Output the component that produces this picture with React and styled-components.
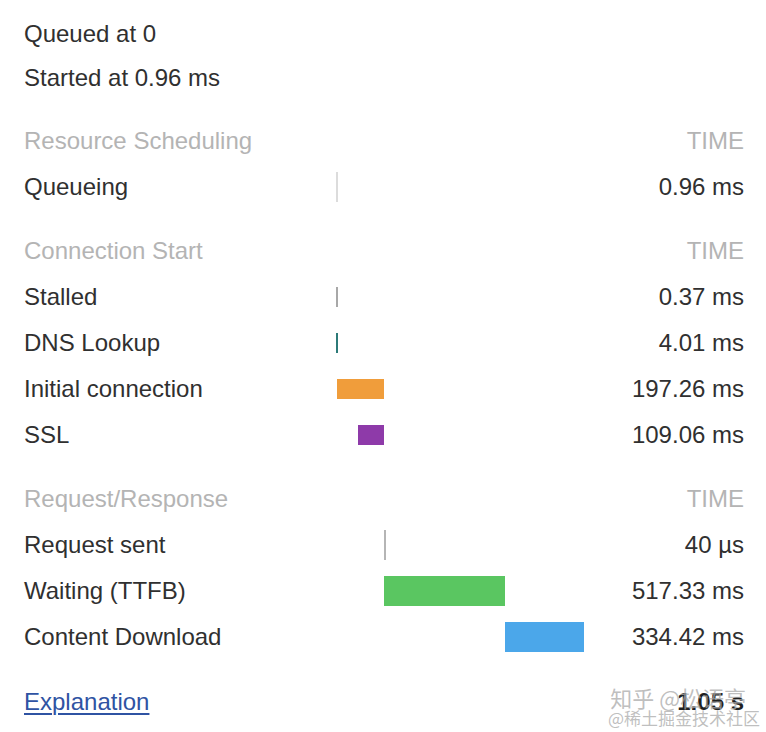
import React from 'react';
import styled, { createGlobalStyle } from 'styled-components';

const GlobalStyle = createGlobalStyle`
  html, body {
    margin: 0;
    padding: 0;
    background: #fff;
  }
  body {
    font-family: "Liberation Sans", Arial, Helvetica, sans-serif;
    color: #303030;
  }
`;

const TOTAL = 1054.39;

const sections = [
  {
    title: 'Resource Scheduling',
    rows: [
      { label: 'Queueing', value: '0.96 ms', start: 0, dur: 0.96, color: '#dcdcdc', h: 30 },
    ],
  },
  {
    title: 'Connection Start',
    rows: [
      { label: 'Stalled', value: '0.37 ms', start: 0.96, dur: 0.37, color: '#a8a8a8', h: 20 },
      { label: 'DNS Lookup', value: '4.01 ms', start: 1.33, dur: 4.01, color: '#2c7a78', h: 20 },
      { label: 'Initial connection', value: '197.26 ms', start: 5.34, dur: 197.26, color: '#f09d3b', h: 20 },
      { label: 'SSL', value: '109.06 ms', start: 93.54, dur: 109.06, color: '#8e3aa9', h: 20 },
    ],
  },
  {
    title: 'Request/Response',
    rows: [
      { label: 'Request sent', value: '40 µs', start: 202.6, dur: 0.04, color: '#b5b5b5', h: 30 },
      { label: 'Waiting (TTFB)', value: '517.33 ms', start: 202.64, dur: 517.33, color: '#5ac661', h: 30 },
      { label: 'Content Download', value: '334.42 ms', start: 719.97, dur: 334.42, color: '#4ba7ea', h: 30 },
    ],
  },
];

const TRACK = 248;

const Panel = styled.div`
  position: relative;
  width: 766px;
  height: 732px;
  box-sizing: border-box;
  padding: 12px 22px 0 24px;
  font-size: 24px;
  overflow: hidden;
`;

const InfoLine = styled.div`
  height: 44px;
  line-height: 44px;
`;

const Section = styled.div`
  margin-top: 18px;
`;

const Row = styled.div`
  display: grid;
  grid-template-columns: 312px ${TRACK}px 1fr;
  align-items: center;
  height: 46px;
  color: ${(p) => (p.$header ? '#b4b4b4' : '#303030')};
`;

const Label = styled.span`
  white-space: nowrap;
`;

const Value = styled.span`
  text-align: right;
  white-space: nowrap;
`;

const Track = styled.div`
  position: relative;
  height: 46px;
`;

const Bar = styled.div`
  position: absolute;
  top: 50%;
  transform: translateY(-50%);
  height: ${(p) => p.$h}px;
  background: ${(p) => p.$color};
`;

const Footer = styled.div`
  margin-top: 19px;
  display: flex;
  justify-content: space-between;
  align-items: center;
  height: 46px;
`;

const Link = styled.a`
  color: #2f53a3;
  text-decoration: underline;
  text-underline-offset: 3px;
  text-decoration-thickness: 2px;
`;

const Total = styled.span`
  color: #202020;
  font-weight: bold;
`;

const Watermark = styled.div`
  position: absolute;
  right: 6px;
  bottom: 4px;
  display: flex;
  flex-direction: column;
  align-items: flex-end;
  color: rgba(170, 170, 170, 0.75);
  font-family: "Noto Sans CJK SC", "Liberation Sans", sans-serif;
  pointer-events: none;
  line-height: 1.1;
`;

const MarkTop = styled.span`
  font-size: 22px;
  margin-right: 14px;
`;

const MarkBottom = styled.span`
  font-size: 17px;
`;

function Timing({ row }) {
  const left = (row.start / TOTAL) * TRACK;
  const width = Math.max((row.dur / TOTAL) * TRACK, 2);
  return (
    <Row>
      <Label>{row.label}</Label>
      <Track>
        <Bar $h={row.h} $color={row.color} style={{ left: `${left}px`, width: `${width}px` }} />
      </Track>
      <Value>{row.value}</Value>
    </Row>
  );
}

export default function App() {
  return (
    <>
      <GlobalStyle />
      <Panel>
        <InfoLine>Queued at 0</InfoLine>
        <InfoLine>Started at 0.96 ms</InfoLine>
        {sections.map((s) => (
          <Section key={s.title}>
            <Row $header>
              <Label>{s.title}</Label>
              <span />
              <Value>TIME</Value>
            </Row>
            {s.rows.map((r) => (
              <Timing key={r.label} row={r} />
            ))}
          </Section>
        ))}
        <Footer>
          <Link href="#">Explanation</Link>
          <Total>1.05 s</Total>
        </Footer>
        <Watermark>
          <MarkTop>知乎 @松语亭</MarkTop>
          <MarkBottom>@稀土掘金技术社区</MarkBottom>
        </Watermark>
      </Panel>
    </>
  );
}
